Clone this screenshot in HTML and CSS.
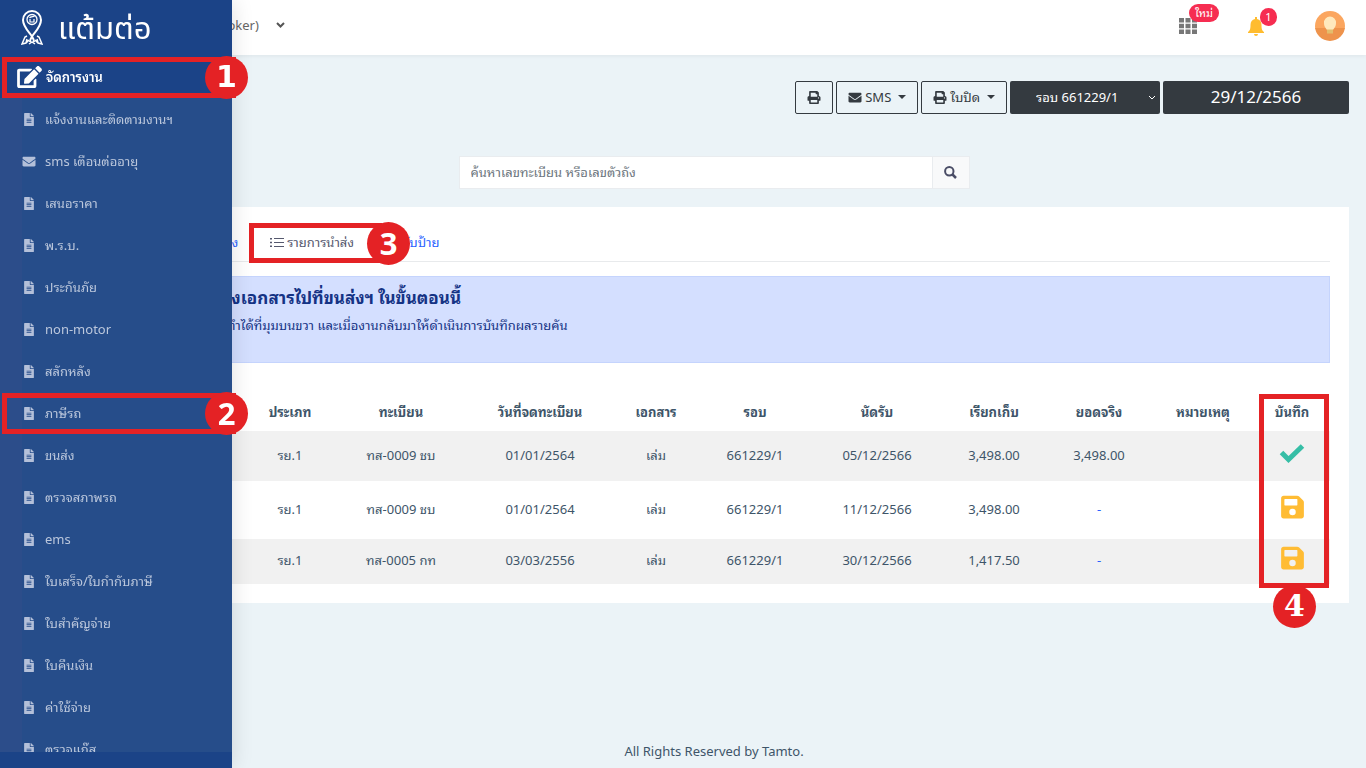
FILE: index.html
```html
<!DOCTYPE html>
<html lang="th">
<head>
<meta charset="utf-8">
<meta name="viewport" content="width=device-width, initial-scale=1">
<title>แต้มต่อ</title>
<link rel="stylesheet" href="styles.css">
</head>
<body>
<svg class="sprite" aria-hidden="true">
  <symbol id="doc" viewBox="0 0 384 512"><path d="M224 136V0H24C10.700 0 0 10.700 0 24v464c0 13.300 10.700 24 24 24h336c13.300 0 24-10.700 24-24V160H248c-13.200 0-24-10.800-24-24zm64 236c0 6.600-5.400 12-12 12H108c-6.600 0-12-5.400-12-12v-8c0-6.600 5.400-12 12-12h168c6.600 0 12 5.400 12 12zm0-64c0 6.600-5.400 12-12 12H108c-6.600 0-12-5.400-12-12v-8c0-6.600 5.400-12 12-12h168c6.600 0 12 5.400 12 12zm0-72v8c0 6.600-5.400 12-12 12H108c-6.600 0-12-5.400-12-12v-8c0-6.600 5.400-12 12-12h168c6.600 0 12 5.400 12 12zm96-114v6H256V0h6c6.400 0 12.500 2.500 17 7l98 98c4.500 4.500 7 10.600 7 17z"/></symbol>
  <symbol id="mail" viewBox="0 0 512 512"><path d="M502 191c4-3 10 0 10 5v204c0 26-22 48-48 48H48c-26 0-48-22-48-48V196c0-5 6-8 10-5 22 18 52 40 155 114 21 16 57 48 91 48s71-33 91-48c103-74 133-96 155-114zM256 320c23 0 57-30 74-42 133-96 143-105 173-129 6-4 9-11 9-18v-19c0-26-22-48-48-48H48c-26 0-48 22-48 48v19c0 7 3 14 9 18 30 24 40 33 173 129 17 12 51 42 74 42z"/></symbol>
  <symbol id="print" viewBox="0 0 512 512"><path fill-rule="evenodd" d="M448 192V77c0-8-3-17-9-23L394 9c-6-6-14-9-23-9H96C78 0 64 14 64 32v160c-35 0-64 29-64 64v112c0 9 7 16 16 16h48v96c0 18 14 32 32 32h320c18 0 32-14 32-32v-96h48c9 0 16-7 16-16V256c0-35-29-64-64-64zm-64 256H128v-96h256v96zm0-224H128V64h192v48c0 9 7 16 16 16h48v96zm48 72a24 24 0 1 1 0-48 24 24 0 0 1 0 48z"/></symbol>
  <symbol id="save" viewBox="0 0 448 512"><path fill-rule="evenodd" d="M434 130L350 46c-9-9-21-14-34-14H48C21 32 0 53 0 80v352c0 27 21 48 48 48h352c27 0 48-21 48-48V164c0-13-5-25-14-34zM224 416a64 64 0 1 1 0-128 64 64 0 0 1 0 128zm96-305v101c0 7-5 12-12 12H76c-7 0-12-5-12-12V108c0-7 5-12 12-12h229c3 0 6 1 8 4l4 3c2 2 3 5 3 8z"/></symbol>
</svg>

<header class="topbar">
  <button class="branch" type="button"><span>(Broker)</span>
    <svg width="9" height="6" viewBox="0 0 9 6"><path d="M1 1l3.500 3.500L8 1" fill="none" stroke="#555" stroke-width="2"/></svg>
  </button>
  <div class="tools">
    <button class="tool" type="button" aria-label="เมนู">
      <svg width="18" height="16" viewBox="0 0 18 16" fill="#777"><path d="M0 0h5v4.500H0zM6.500 0h5v4.500h-5zM13 0h5v4.500h-5zM0 5.750h5v4.500H0zM6.500 5.750h5v4.500h-5zM13 5.750h5v4.500h-5zM0 11.500h5V16H0zM6.500 11.500h5V16h-5zM13 11.500h5V16h-5z"/></svg>
      <span class="badge badge-new">ใหม่</span>
    </button>
    <button class="tool" type="button" aria-label="แจ้งเตือน">
      <svg width="16" height="19" viewBox="0 0 16 19" fill="#ffbc2f"><path d="M7 0h2v2c3 .5 4.500 3 4.500 6 0 4 .5 5.500 2.500 7v1H0v-1c2-1.500 2.500-3 2.500-7 0-3 1.500-5.500 4.500-6zM6 17h4a2 2 0 0 1-4 0z"/></svg>
      <span class="badge badge-count">1</span>
    </button>
    <button class="avatar" type="button" aria-label="บัญชี">
      <svg width="30" height="30" viewBox="0 0 30 30"><defs><clipPath id="round"><circle cx="15" cy="15" r="15"/></clipPath></defs><g clip-path="url(#round)"><path fill="#fba65f" d="M0 0h30v18H0z"/><path fill="#ee934c" d="M0 17h30v13H0z"/><path fill="#ffe9bd" d="M15 5.500a6 6 0 0 1 6 6.500c0 4-2 5-3 7h-6c-1-2-3-3-3-7a6 6 0 0 1 6-6.500z"/><path fill="#e3bd6c" d="M12 18.500h6v4h-6z"/></g></svg>
    </button>
  </div>
</header>

<aside class="sidebar">
  <a class="brand" href="#">
    <svg width="22" height="36" viewBox="0 0 22 36" fill="none" stroke="#fff"><path stroke-width="2" d="M9 33c0-3 1-4 3-7 3-4 8-9 8-15a9 9 0 0 0-18 0c0 6 5 11 8 15 2 3 3 4 3 7"/><circle cx="11" cy="10.500" r="5" stroke-width="1.300"/><path stroke-width="1.200" d="M8.500 9c1-2 4-1 5-2M9 10v3h4v-3"/><path stroke-width="1.500" d="M6 27l-2 1-3 7 4-1 3-3M16 27l2 1 3 7-4-1-3-3M5 34l1-4M17 34l-1-4M8 35l3-2 3 2"/></svg>
    <span>แต้มต่อ</span>
  </a>
  <a class="section" href="#">
    <svg width="25" height="22" viewBox="0 0 576 512" fill="#fff"><path d="M402.600 83.200l90.200 90.200c3.800 3.800 3.800 10 0 13.800L274.400 405.600l-92.800 10.300c-12.400 1.400-22.900-9.100-21.500-21.500l10.300-92.800L388.800 83.200c3.800-3.800 10-3.800 13.800 0zm162-22.900l-48.800-48.800c-15.200-15.200-39.900-15.200-55.200 0l-35.400 35.400c-3.800 3.800-3.800 10 0 13.800l90.200 90.200c3.800 3.800 10 3.800 13.800 0l35.400-35.400c15.200-15.300 15.200-40 0-55.200zM384 346.200V448H64V128h229.800c3.200 0 6.200-1.300 8.500-3.500l40-40c7.600-7.600 2.200-20.500-8.500-20.500H48C21.500 64 0 85.500 0 112v352c0 26.500 21.500 48 48 48h352c26.500 0 48-21.500 48-48V306.200c0-10.700-12.900-16-20.500-8.500l-40 40c-2.200 2.300-3.500 5.300-3.500 8.500z"/></svg>
    <span>จัดการงาน</span>
    <span class="mark mark-row"><b class="num foot-one">1</b></span>
  </a>
  <nav class="menu">
    <a href="#"><svg class="ico"><use href="#doc"/></svg>แจ้งงานและติดตามงานฯ</a>
    <a href="#"><svg class="ico"><use href="#mail"/></svg>sms เตือนต่ออายุ</a>
    <a href="#"><svg class="ico"><use href="#doc"/></svg>เสนอราคา</a>
    <a href="#"><svg class="ico"><use href="#doc"/></svg>พ.ร.บ.</a>
    <a href="#"><svg class="ico"><use href="#doc"/></svg>ประกันภัย</a>
    <a href="#"><svg class="ico"><use href="#doc"/></svg>non-motor</a>
    <a href="#"><svg class="ico"><use href="#doc"/></svg>สลักหลัง</a>
    <a href="#"><svg class="ico"><use href="#doc"/></svg>ภาษีรถ<span class="mark mark-row"><b class="num">2</b></span></a>
    <a href="#"><svg class="ico"><use href="#doc"/></svg>ขนส่ง</a>
    <a href="#"><svg class="ico"><use href="#doc"/></svg>ตรวจสภาพรถ</a>
    <a href="#"><svg class="ico"><use href="#doc"/></svg>ems</a>
    <a href="#"><svg class="ico"><use href="#doc"/></svg>ใบเสร็จ/ใบกำกับภาษี</a>
    <a href="#"><svg class="ico"><use href="#doc"/></svg>ใบสำคัญจ่าย</a>
    <a href="#"><svg class="ico"><use href="#doc"/></svg>ใบคืนเงิน</a>
    <a href="#"><svg class="ico"><use href="#doc"/></svg>ค่าใช้จ่าย</a>
    <a href="#"><svg class="ico"><use href="#doc"/></svg>ตรวจแก๊ส</a>
  </nav>
</aside>

<main class="page">
  <div class="actions">
    <button class="btn" type="button" aria-label="พิมพ์"><svg class="bico"><use href="#print"/></svg></button>
    <button class="btn" type="button"><svg class="bico"><use href="#mail"/></svg>SMS<i class="caret"></i></button>
    <button class="btn" type="button"><svg class="bico"><use href="#print"/></svg>ใบปิด<i class="caret"></i></button>
    <div class="round">
      <select aria-label="รอบ"><option>รอบ 661229/1</option></select>
      <svg width="8" height="6" viewBox="0 0 8 6"><path d="M1 1l3 3 3-3" fill="none" stroke="#fff"/></svg>
    </div>
    <input class="date" type="text" value="29/12/2566" aria-label="วันที่">
  </div>

  <form class="search">
    <input type="text" placeholder="ค้นหาเลขทะเบียน หรือเลขตัวถัง" aria-label="ค้นหา">
    <button type="button" aria-label="ค้นหา"><svg width="13" height="13" viewBox="0 0 13 13" fill="none" stroke="#4a4d66" stroke-width="2"><circle cx="5.300" cy="5.300" r="4.200"/><path stroke-width="2.500" d="M8.500 8.500L12 12"/></svg></button>
  </form>

  <section class="card">
    <nav class="tabs">
      <a class="first" href="#">ส่ง</a>
      <a class="current" href="#"><svg width="14" height="9" viewBox="0 0 14 9" fill="#55586e"><path d="M0 0h2v1.500H0zM4 0h10v1H4zM0 3.700h2v1.500H0zM4 4h10v1H4zM0 7.400h2v1.500H0zM4 7.900h10v1H4z"/></svg>รายการนำส่ง<span class="mark mark-tab"><b class="num">3</b></span></a>
      <a href="#">รับป้าย</a>
    </nav>
    <div class="alert">
      <h4>ส่งเอกสารไปที่ขนส่งฯ ในขั้นตอนนี้</h4>
      <p>ทำได้ที่มุมบนขวา และเมื่องานกลับมาให้ดำเนินการบันทึกผลรายคัน</p>
    </div>
    <div class="tablebox">
      <table>
        <colgroup><col><col class="w92"><col class="w130"><col class="w148"><col class="w84"><col class="w114"><col class="w130"><col class="w104"><col class="w106"><col class="w102"><col class="w76"></colgroup>
        <thead><tr><th></th><th>ประเภท</th><th>ทะเบียน</th><th>วันที่จดทะเบียน</th><th>เอกสาร</th><th>รอบ</th><th>นัดรับ</th><th>เรียกเก็บ</th><th>ยอดจริง</th><th>หมายเหตุ</th><th>บันทึก</th></tr></thead>
        <tbody>
          <tr class="r1"><td></td><td>รย.1</td><td>ทส-0009 ชบ</td><td>01/01/2564</td><td>เล่ม</td><td>661229/1</td><td>05/12/2566</td><td>3,498.00</td><td>3,498.00</td><td></td><td><svg width="26" height="20" viewBox="0 0 26 20"><path d="M2.500 9.500l7 7L23.500 3" fill="none" stroke="#36bea6" stroke-width="5"/></svg></td></tr>
          <tr class="r2"><td></td><td>รย.1</td><td>ทส-0009 ชบ</td><td>01/01/2564</td><td>เล่ม</td><td>661229/1</td><td>11/12/2566</td><td>3,498.00</td><td><a href="#">-</a></td><td></td><td><button type="button" aria-label="บันทึก"><svg class="disk"><use href="#save"/></svg></button></td></tr>
          <tr class="r3"><td></td><td>รย.1</td><td>ทส-0005 กท</td><td>03/03/2556</td><td>เล่ม</td><td>661229/1</td><td>30/12/2566</td><td>1,417.50</td><td><a href="#">-</a></td><td></td><td><button type="button" aria-label="บันทึก"><svg class="disk"><use href="#save"/></svg></button></td></tr>
        </tbody>
      </table>
      <span class="mark mark-col"><b class="num slab">4</b></span>
    </div>
  </section>
</main>
<footer class="foot">All Rights Reserved by Tamto.</footer>
</body>
</html>
```
FILE: styles.css
```css
* { box-sizing: border-box; }
body {
  margin: 0;
  min-height: 100vh;
  display: flex;
  flex-direction: column;
  background: #ebf3f7;
  color: #3e5569;
  font: 13px/20px "Noto Sans", "Noto Sans Thai Looped", "Noto Looped Thai", Loma, Garuda, Waree, "Noto Serif Thai", sans-serif;
  overflow: hidden;
}
button, input, select { font: inherit; color: inherit; margin: 0; }
button { background: none; border: 0; padding: 0; cursor: pointer; }
a { color: inherit; text-decoration: none; }
svg { flex: none; }
.sprite { position: absolute; width: 0; height: 0; }

.topbar {
  display: flex;
  align-items: center;
  justify-content: space-between;
  height: 55px;
  padding: 0 21px 3px 210px;
  background: #fff;
  box-shadow: 0 1px 4px rgba(0, 0, 0, .06);
}
.branch { display: flex; align-items: center; gap: 17px; padding-bottom: 2px; color: #666; }
.tools { display: flex; align-items: center; }
.tool { position: relative; display: flex; margin-right: 51px; }
.badge {
  position: absolute;
  height: 18px;
  border-radius: 9px;
  background: #f62d51;
  color: #fff;
  font-size: 11px;
  line-height: 18px;
}
.badge-new { left: 10px; top: -14px; width: 30px; }
.badge-count { left: 12px; top: -9px; width: 17px; }
.avatar { display: flex; }

.sidebar {
  position: fixed;
  z-index: 5;
  top: 0;
  bottom: 0;
  left: 0;
  width: 232px;
  padding-bottom: 16px;
  display: flex;
  flex-direction: column;
  background: #1b4387;
  color: #fff;
  box-shadow: 1px 0 20px rgba(0, 0, 0, .12);
}
.brand {
  display: flex;
  align-items: center;
  gap: 15px;
  height: 55px;
  padding: 0 0 2px 21px;
  font-family: "Noto Sans", "Noto Sans Thai", sans-serif;
  font-size: 31px;
  line-height: 52px;
}
.section {
  position: relative;
  z-index: 1;
  display: flex;
  align-items: center;
  gap: 4px;
  height: 43px;
  padding-left: 17px;
  font-weight: 600;
}
.menu {
  flex: 1;
  min-height: 0;
  overflow-x: visible;
  overflow-y: clip;
  background: linear-gradient(90deg, #2c4d8a 22px, #264d8a 22px);
  color: #bbc7dc;
}
.menu a {
  position: relative;
  display: flex;
  align-items: center;
  gap: 9px;
  height: 42px;
  padding-left: 22px;
}
.ico { width: 14px; height: 13px; fill: #b4c0d9; }

.mark { position: absolute; border: 5px solid #e42225; pointer-events: none; }
.mark-row { left: 2px; right: -4px; top: 2px; height: 41px; border-right: 0; }
.menu .mark-row { top: 1px; }
.num {
  position: absolute;
  right: -12px;
  top: -6px;
  width: 43px;
  height: 43px;
  border-radius: 50%;
  background: #e42225;
  color: #fff;
  font: bold 31px/42px "Noto Sans", sans-serif;
  text-align: center;
}
.foot-one { font-family: "DejaVu Sans", sans-serif; font-size: 30px; }
.slab { font-family: "DejaVu Serif", serif; font-size: 30px; }

.page { flex: 1; margin-left: 62px; padding: 26px 17px 0; }
.actions { display: flex; justify-content: flex-end; gap: 3px; }
.btn {
  display: flex;
  align-items: center;
  gap: 3px;
  height: 33px;
  padding: 0 11px 1px;
  border: 1px solid #343a40;
  border-radius: 2px;
  color: #343a40;
  font-size: 13px;
}
.bico { width: 14px; height: 13px; fill: #343a40; }
.caret { margin-left: 4px; border: 4px solid transparent; border-top-color: #343a40; border-bottom: 0; }
.round { position: relative; display: flex; width: 150px; }
.round select {
  appearance: none;
  width: 100%;
  height: 33px;
  padding: 0 26px 2px;
  border: 0;
  border-radius: 2px;
  background: #343a40;
  color: #fff;
}
.round svg { position: absolute; right: 4px; top: 14px; }
.date {
  width: 186px;
  height: 33px;
  padding-bottom: 3px;
  border: 0;
  border-radius: 2px;
  background: #343a40;
  color: #fff;
  font-size: 17px;
  text-align: center;
}
.search { display: flex; width: 511px; margin: 42px auto 18px; }
.search input {
  flex: 1;
  min-width: 0;
  height: 33px;
  padding: 0 11px 2px;
  border: 1px solid #e9ecef;
  background: #fff;
}
.search input::placeholder { color: #6c757d; opacity: 1; }
.search button {
  display: grid;
  place-items: center;
  width: 37px;
  border: 1px solid #e9ecef;
  border-left: 0;
  background: #f8f9fa;
}

.card { padding: 17px 19px 19px; background: #fff; }
.tabs {
  display: flex;
  height: 38px;
  padding-left: 126px;
  border-bottom: 1px solid #e8eaec;
  line-height: 36px;
  color: #2962ff;
}
.tabs .current {
  position: relative;
  z-index: 1;
  display: flex;
  align-items: center;
  gap: 3px;
  height: 36px;
  margin: 0 49px 0 32px;
  color: #55586e;
}
.mark-tab { left: -21px; right: -28px; top: -1px; height: 40px; border-right: 0; }
.mark-tab .num { right: -28px; top: -6px; }
.alert {
  margin-top: 14px;
  height: 87px;
  padding: 9px 12px;
  border: 1px solid #c5d4fd;
  background: #d4dfff;
  color: #153385;
}
.alert h4 { margin: 0 0 5px; padding-left: 110px; font-size: 17px; line-height: 24px; }
.alert p { margin: 0; padding-left: 116px; }

.tablebox { position: relative; margin-top: 28px; }
table { width: 100%; table-layout: fixed; border-collapse: collapse; text-align: center; }
th { height: 40px; padding: 1px 0 0; }
td { padding: 0 0 3px; }
td svg { display: inline-block; vertical-align: middle; }
td a { color: #2962ff; }
.r1, .r3 { background: #f1f1f1; }
.r1 { height: 50px; }
.r2 { height: 58px; }
.r3 { height: 45px; }
td:last-child { padding-bottom: 7px; }
.disk { width: 23px; height: 26px; fill: #ffbc34; }
.w76 { width: 76px; }
.w84 { width: 84px; }
.w92 { width: 92px; }
.w102 { width: 102px; }
.w104 { width: 104px; }
.w106 { width: 106px; }
.w114 { width: 114px; }
.w130 { width: 130px; }
.w148 { width: 148px; }
.mark-col { right: 1px; top: 3px; bottom: -4px; width: 70px; }
.mark-col .num { right: 8px; top: auto; bottom: -45px; }
.foot { margin-left: 62px; padding-bottom: 7px; text-align: center; }
```
